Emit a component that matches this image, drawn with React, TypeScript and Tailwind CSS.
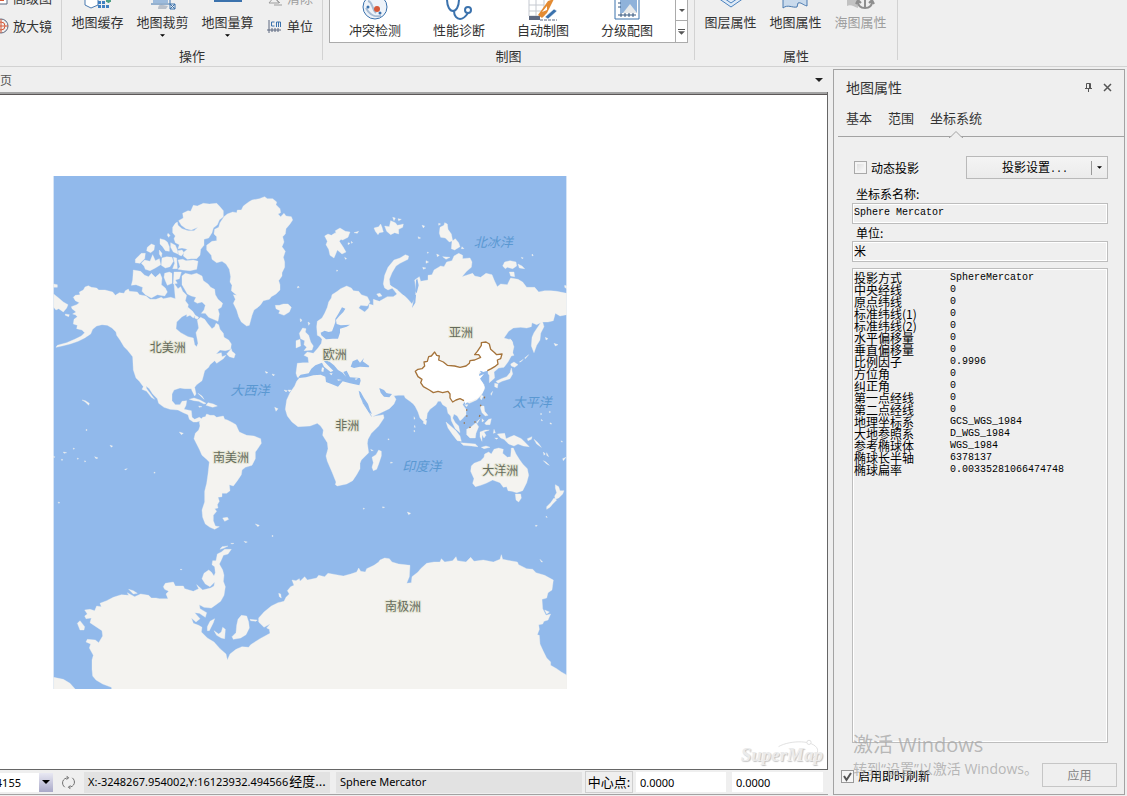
import React, { useState } from 'react';
import clsx from 'clsx';

const CJK = 'font-["Noto_Sans_CJK_SC",sans-serif]';
const UI = 'font-["Noto_Sans","Noto_Sans_CJK_SC",sans-serif]';
const MONO = 'font-["Liberation_Mono","Noto_Sans_CJK_SC",monospace]';

// ─── Projection data ───────────────────────────────────────────

const PARAMS: [string, string][] = [
  ['投影方式', 'SphereMercator'],
  ['中央经线', '0'],
  ['原点纬线', '0'],
  ['标准纬线(1)', '0'],
  ['标准纬线(2)', '0'],
  ['水平偏移量', '0'],
  ['垂直偏移量', '0'],
  ['比例因子', '0.9996'],
  ['方位角', '0'],
  ['纠正角', '0'],
  ['第一点经线', '0'],
  ['第二点经线', '0'],
  ['地理坐标系', 'GCS_WGS_1984'],
  ['大地参照系', 'D_WGS_1984'],
  ['参考椭球体', 'WGS_1984'],
  ['椭球长半轴', '6378137'],
  ['椭球扁率', '0.00335281066474748'],
];

// ─── Map geometry (three units per pixel) ──────────────────────

const LAND = [
  // North America
  'M70 382 76 376 90 374 88 366 100 360 105 351 115 347 124 352 140 354 146 360 165 360 188 366 196 376 208 368 222 370 226 362 235 357 238 364 262 366 268 374 288 378 300 388 318 388 334 382 340 386 362 382 376 386 372 340 384 356 392 350 398 364 410 376 406 392 415 404 412 418 420 428 396 440 380 456 378 476 392 488 414 500 430 504 434 524 440 530 444 520 438 488 446 474 442 450 452 442 464 448 474 462 486 476 494 470 498 460 506 464 510 478 520 490 522 502 536 510 544 522 542 538 526 542 510 540 498 552 514 548 516 560 528 556 520 566 500 580 494 572 480 584 476 592 464 602 460 618 456 632 440 644 434 652 438 672 434 678 426 662 424 656 404 656 390 654 372 660 366 672 366 692 376 704 390 704 396 694 410 692 408 706 402 718 424 722 426 742 434 748 448 742 460 750 440 756 430 756 418 748 414 734 400 728 384 720 360 718 342 712 326 700 322 686 308 672 298 656 288 648 290 656 302 672 314 688 304 682 290 664 276 658 280 650 268 634 258 624 250 600 248 560 232 540 222 530 210 510 200 496 198 486 186 474 172 466 156 464 140 468 128 478 122 492 104 504 84 514 60 522 36 528 18 532 22 526 50 518 74 508 94 498 104 488 96 480 80 476 82 466 70 462 72 448 82 440 76 434 68 432 78 426 66 416 64 410 80 404 88 398 76 392Z',
  // Newfoundland, Chukotka tip
  'M530 552 544 536 546 544 556 552 552 564 538 560Z',
  'M11 372 26 384 40 396 54 404 50 414 40 426 26 416 18 420 11 412Z',
  'M11 342 22 344 22 352 11 352Z M46 432 58 434 56 440 46 436Z',
  // Greenland
  'M522 140 532 132 548 126 560 128 562 120 574 120 580 108 596 96 606 90 628 86 644 80 652 86 668 86 680 96 678 104 690 116 692 128 684 132 692 140 702 130 708 138 724 140 728 150 720 162 708 176 706 192 698 200 702 216 696 230 706 244 700 262 704 276 704 292 696 308 696 318 686 332 690 344 690 360 678 372 664 380 658 388 640 392 632 404 624 412 612 420 606 436 598 466 590 468 574 456 566 440 560 420 550 400 556 388 550 374 560 376 544 362 546 346 540 336 542 320 538 298 528 282 516 274 500 278 486 268 484 256 470 240 470 226 486 214 500 212 500 200 492 192 494 178 506 172 510 158Z',
  // Ellesmere, Devon
  'M520 122 520 140 508 150 502 164 490 174 486 188 476 204 462 208 462 226 452 238 450 256 440 266 424 266 412 268 400 258 402 246 412 238 396 234 384 236 388 224 376 218 372 206 376 198 368 188 368 172 376 160 382 156 384 166 396 176 414 182 432 182 444 172 424 180 408 176 394 166 386 152 400 144 398 130 414 122 422 124 430 106 442 108 460 100 478 102 500 100 508 108Z',
  'M384 270 398 268 408 272 430 270 444 274 440 298 420 302 398 300 384 298 390 290Z M398 282 424 280 398 284Z',
  // Arctic archipelago
  'M330 206 344 210 352 216 358 230 358 244 346 242 338 230 330 222Z M362 218 376 226 382 240 384 252 370 246 362 232Z M384 242 396 240 402 248 394 258 386 254Z',
  'M292 232 304 222 314 226 312 240 302 248 290 242Z M328 240 336 250 334 262 328 252Z M354 190 360 196 356 202 352 196Z',
  'M256 268 274 250 286 250 284 266 270 280 256 278Z M274 280 284 270 300 274 308 254 316 272 328 266 332 284 316 294 300 302 286 298 282 288Z',
  'M336 264 350 260 366 262 370 274 360 290 346 294 334 286Z M370 262 380 264 382 296 368 296 374 280Z',
  'M250 300 272 304 284 316 296 320 304 310 316 322 330 310 336 324 334 344 346 354 352 366 344 378 322 374 304 384 286 374 276 364 278 352 258 344 244 346 248 330Z',
  'M344 310 358 306 366 310 366 340 352 346 346 332 342 322Z M372 306 394 306 388 326 376 330 382 340 370 342Z',
  // Baffin
  'M396 318 406 310 424 314 440 310 456 318 460 332 474 342 482 352 494 358 496 374 504 388 518 400 514 412 504 418 508 432 504 454 490 448 476 442 466 430 454 430 462 420 466 406 456 396 442 400 432 394 438 382 424 378 412 372 404 358 396 344Z',
  'M412 410 428 424 436 436 430 444 420 436 410 440Z M436 436 446 442 442 448 434 444Z',
  // Iceland, British Isles
  'M676 406 688 406 700 402 714 402 724 412 718 426 702 436 686 430 690 422 678 416Z M744 348 748 352 742 354Z',
  'M748 490 758 474 768 476 766 486 776 496 782 516 790 528 786 540 762 542 770 532 762 524 764 512 752 506Z M738 512 750 508 752 528 738 534Z M750 446 756 450 752 456Z M774 456 780 460 776 466Z',
  // South America
  'M448 756 458 742 466 740 470 732 480 736 492 736 500 742 520 738 524 748 532 750 548 758 558 764 564 778 568 786 590 796 612 798 632 806 634 820 622 838 616 846 616 866 606 886 586 892 576 900 574 914 562 932 550 948 538 944 540 962 530 970 516 970 516 980 504 982 508 994 502 1004 504 1014 494 1016 500 1024 490 1036 490 1052 496 1068 508 1070 494 1078 480 1072 466 1062 458 1042 456 1020 464 996 464 964 470 940 474 912 478 876 468 866 456 856 448 838 440 822 432 806 436 790 446 780 450 768Z',
  'M518 1044 532 1042 536 1048 524 1054Z M616 1062 628 1066 624 1070Z',
  // Cuba, Hispaniola
  'M418 688 432 684 450 690 468 700 462 702 446 694 432 692Z M468 706 474 698 490 702 502 708 488 712Z M446 708 456 710 448 712Z M444 670 456 678 462 688 454 680Z',
  // Pacific specks
  'M96 690 106 692 118 700 116 706 106 696Z M388 786 400 790 394 794Z M108 778 112 780 108 782Z M180 826 188 828 184 832Z M134 860 144 864 138 866Z M40 846 50 848 42 850Z M34 868 38 868 36 872Z M70 834 74 836 70 838Z M82 864 86 866 82 868Z M104 872 108 874 104 876Z M10 858 14 860 12 864Z M312 906 316 908 312 910Z M24 996 30 998 26 1000Z M224 898 232 896 226 900Z',
  'M646 604 654 608 648 610Z M666 612 674 614 670 618Z M702 660 712 662 708 666Z M714 660 724 660 718 666Z M674 712 684 716 678 724Z M666 1096 670 1098 666 1100Z',
  // Eurasia with Africa
  'M742 622 738 610 742 580 760 578 776 578 774 562 762 556 772 546 790 550 804 534 814 520 816 508 810 500 802 496 800 470 802 454 816 444 824 430 832 412 836 396 844 384 846 374 862 364 872 356 890 348 904 354 910 362 926 364 934 374 952 380 960 396 952 408 932 406 926 414 944 426 956 414 958 402 970 406 970 388 988 394 1012 380 1030 380 1044 370 1064 378 1074 388 1086 402 1096 382 1098 360 1094 330 1108 320 1112 334 1134 330 1134 316 1146 314 1152 300 1172 288 1182 290 1190 276 1206 272 1212 258 1226 250 1238 256 1238 266 1260 264 1266 276 1264 292 1250 304 1236 320 1268 310 1274 318 1292 322 1308 310 1326 314 1334 334 1342 350 1352 342 1372 344 1382 324 1404 328 1418 336 1430 352 1454 352 1466 366 1484 362 1502 362 1520 364 1550 370 1550 434 1530 438 1516 430 1510 452 1494 456 1478 456 1482 470 1472 490 1470 510 1460 526 1452 548 1444 528 1446 502 1452 488 1472 458 1460 464 1446 458 1444 470 1430 474 1412 472 1390 474 1376 484 1362 504 1384 510 1392 530 1386 554 1374 576 1362 592 1346 594 1332 606 1334 624 1318 638 1318 616 1310 606 1300 612 1290 610 1294 602 1284 620 1302 644 1304 656 1294 676 1280 690 1258 700 1244 694 1238 704 1248 718 1248 734 1236 748 1230 752 1222 738 1212 732 1208 744 1216 758 1226 768 1230 788 1216 776 1204 752 1202 738 1194 730 1190 712 1178 704 1172 694 1164 694 1158 704 1140 718 1132 730 1130 746 1120 754 1110 744 1104 726 1096 710 1090 702 1080 694 1066 684 1062 676 1044 676 1028 678 1010 670 994 660 988 656 1000 678 1014 680 1026 668 1038 688 1032 702 1018 716 990 730 966 740 958 722 936 690 926 664 938 700 954 724 964 740 1000 734 1002 744 986 768 964 790 954 808 952 820 956 848 934 870 930 880 930 896 920 914 908 932 890 942 862 948 856 944 858 936 846 906 832 874 828 858 834 836 832 818 818 796 820 780 812 768 802 760 780 768 744 770 726 756 712 738 706 718 710 690 720 668 734 648 740 634 750 622Z',
  // Novaya Zemlya, Svalbard, Franz Josef, Severnaya
  'M1000 342 1004 316 1014 292 1032 270 1050 264 1066 254 1076 258 1074 268 1050 280 1038 288 1026 308 1018 328 1020 344 1028 354 1014 360 1004 354Z',
  'M1020 346 1040 358 1062 378 1044 376Z',
  'M824 198 834 192 844 196 856 188 862 196 872 192 874 206 868 214 880 232 888 246 876 252 862 240 852 264 840 256 836 238 828 224 832 214Z M856 182 870 174 886 184 900 186 894 202 878 210 862 204Z M912 188 926 184 922 190Z M894 218 900 220 894 224Z M904 214 908 218 904 220Z M884 262 890 266 886 268Z M860 300 864 302 860 304Z',
  'M972 174 986 170 992 162 996 172 1000 186 988 188 984 194 976 184Z M1004 168 1018 170 1022 152 1036 158 1042 166 1052 164 1060 162 1058 172 1046 178 1046 192 1034 188 1022 194 1010 184Z M1028 142 1036 144 1032 152Z M1044 146 1054 148 1046 152Z',
  'M1170 172 1182 166 1184 158 1192 162 1194 178 1204 192 1208 212 1198 216 1186 204 1172 202 1168 190Z M1206 214 1216 206 1226 218 1230 230 1214 240 1204 236Z M1236 230 1242 236 1234 236Z M1166 160 1172 162 1166 166Z M1116 166 1124 168 1120 174Z M1104 200 1112 204 1106 206Z',
  'M1358 288 1364 276 1380 272 1398 276 1400 288 1388 296 1372 292 1366 296Z M1404 282 1416 288 1424 296 1408 294Z M1378 306 1392 306 1394 320 1382 318Z M1446 252 1450 256 1446 258Z M1414 262 1420 264 1416 266Z M1128 272 1136 276 1128 280Z M1160 252 1168 256 1162 260Z M1178 260 1200 262 1188 268Z M1118 292 1128 294 1120 298Z',
  'M1544 346 1550 348 1550 356 1544 352Z M980 372 990 370 996 378 986 380Z M1132 246 1136 248 1132 250Z M1486 502 1494 506 1488 510Z M1512 520 1524 524 1516 528Z',
  // Sakhalin, Japan, Taiwan, Philippines
  'M1380 506 1388 516 1388 548 1392 556 1384 558 1378 534Z M1382 582 1392 576 1404 584 1394 592 1384 588Z M1384 594 1388 612 1380 626 1356 634 1344 640 1338 634 1354 626 1370 620 1380 608Z M1334 640 1344 642 1342 654 1334 650Z M1408 576 1420 568 1412 576Z M1424 564 1436 554 1426 566Z',
  'M1290 684 1294 676 1300 678 1294 690Z M1244 704 1254 704 1250 710Z M1322 672 1328 664 1324 676Z',
  'M1292 708 1302 708 1304 724 1314 736 1306 738 1296 728 1292 716Z M1296 746 1302 752 1296 756Z M1304 760 1316 748 1324 746 1320 764 1308 764Z M1280 756 1290 746 1282 760Z',
  // Indonesia, New Guinea
  'M1188 756 1202 768 1218 782 1230 798 1234 814 1222 812 1208 794 1194 774Z M1232 818 1252 820 1276 822 1284 830 1264 828 1240 826Z M1250 778 1264 770 1278 758 1286 770 1278 790 1276 804 1260 804 1250 794Z M1290 786 1306 780 1318 780 1302 786 1308 796 1302 804 1296 794 1296 814 1290 800Z M1294 832 1308 828 1320 832 1302 836Z',
  'M1332 778 1336 788 1330 790Z M1334 804 1344 804 1340 808Z M1342 792 1364 790 1368 806 1392 796 1414 806 1424 816 1438 830 1420 828 1404 822 1392 828 1376 822 1362 808 1352 804Z M1432 806 1446 800 1444 808 1434 812Z M1452 808 1464 818 1474 832 1460 822Z',
  // Australia, Tasmania, New Zealand
  'M1264 888 1272 880 1292 872 1302 862 1304 852 1316 846 1324 852 1332 838 1346 834 1360 838 1358 850 1372 862 1382 860 1384 834 1390 834 1398 852 1408 868 1418 882 1432 896 1436 916 1430 938 1418 962 1400 968 1386 964 1374 962 1370 950 1360 952 1350 938 1328 930 1308 940 1292 946 1276 950 1268 940 1272 926 1262 904Z M1396 972 1412 972 1414 984 1406 996 1398 990Z',
  'M1516 944 1526 950 1530 962 1542 962 1538 972 1526 984 1516 988 1514 978 1520 968 1516 954Z M1512 984 1520 990 1508 1002 1500 1012 1490 1018 1490 1010 1502 998Z M1488 1038 1492 1042 1488 1042Z M1456 1066 1462 1066 1458 1070Z',
  'M1480 846 1486 852 1482 856Z M1480 872 1488 876 1498 886 1490 882Z M1538 866 1548 862 1540 872Z M1490 848 1496 860 1490 856Z M1472 730 1476 732 1472 734Z M1498 724 1502 726 1498 728Z M1474 748 1478 752 1474 752Z M1500 758 1506 762 1500 762Z M1534 812 1538 816 1534 816Z',
  // Madagascar, Sri Lanka, specks
  'M986 840 994 844 994 858 986 882 980 898 970 902 966 892 970 878 966 862 978 854Z M1122 748 1130 752 1128 764 1120 760Z M1092 740 1095 746 1092 748Z M1094 766 1096 772 1093 772Z M1092 780 1095 784 1092 786Z M962 838 970 842 964 842Z M1022 876 1028 878 1022 880Z M1072 1026 1082 1030 1076 1034Z M998 1010 1004 1012 998 1014Z M940 1014 944 1016 940 1018Z M1014 806 1018 808 1014 810Z',
  // Antarctica
  'M104 1320 120 1318 134 1322 140 1308 154 1310 150 1300 170 1292 190 1282 214 1274 236 1276 232 1268 254 1280 272 1272 296 1276 304 1284 318 1284 328 1286 354 1286 348 1272 356 1264 344 1258 340 1250 346 1240 370 1236 376 1248 400 1248 404 1256 430 1264 446 1256 440 1244 458 1260 482 1254 492 1248 494 1236 480 1250 466 1242 456 1226 462 1210 476 1200 484 1206 492 1218 496 1208 494 1190 486 1184 488 1172 498 1172 502 1152 514 1146 524 1138 544 1138 534 1152 520 1156 514 1170 508 1182 518 1200 522 1216 520 1234 526 1250 522 1276 512 1294 498 1304 484 1314 462 1312 448 1304 450 1316 470 1328 466 1342 448 1330 434 1328 450 1346 438 1356 424 1344 430 1360 446 1366 456 1372 454 1386 472 1404 492 1416 510 1436 528 1452 532 1470 540 1452 558 1438 576 1430 596 1432 602 1424 630 1406 660 1390 658 1378 650 1374 660 1362 642 1372 626 1356 626 1344 642 1326 664 1308 684 1298 702 1294 708 1282 718 1272 712 1262 722 1250 732 1246 726 1230 738 1232 748 1226 750 1234 764 1220 772 1230 800 1224 806 1216 824 1220 834 1210 858 1214 880 1218 902 1212 920 1206 926 1194 932 1204 946 1206 950 1196 972 1186 986 1176 990 1170 1004 1164 1018 1166 1026 1176 1046 1182 1080 1186 1078 1220 1070 1240 1084 1238 1086 1220 1104 1206 1112 1196 1130 1180 1152 1176 1170 1176 1174 1166 1184 1176 1208 1172 1218 1160 1222 1172 1248 1176 1262 1162 1272 1174 1300 1170 1330 1176 1350 1168 1354 1154 1358 1168 1380 1172 1402 1176 1406 1184 1430 1196 1448 1198 1458 1208 1484 1216 1510 1230 1506 1260 1494 1268 1490 1284 1476 1288 1478 1316 1488 1336 1502 1332 1494 1350 1482 1354 1478 1362 1466 1364 1468 1378 1462 1394 1468 1396 1470 1422 1480 1444 1490 1464 1502 1476 1502 1486 1520 1496 1534 1506 1552 1516 1552 1560 186 1560 184 1552 158 1542 138 1530 128 1518 126 1498 126 1470 130 1456 118 1434 122 1422 108 1416 112 1408 136 1410 146 1418 158 1398 156 1382 138 1370 120 1358 124 1344 108 1346 104 1338 112 1332Z',
  'M11 1522 40 1528 60 1540 78 1560 11 1560Z M82 1360 90 1352 104 1370 102 1380 90 1380Z M236 1258 250 1262 262 1270 250 1272Z',
  'M472 1370 480 1354 494 1346 490 1358 478 1382 472 1382Z M492 1382 506 1392 514 1386 518 1372 526 1378 524 1406 514 1404 500 1396Z M546 1400 558 1388 560 1366 564 1348 574 1336 590 1338 596 1356 598 1374 588 1394 572 1404 550 1408Z M600 1348 622 1350 618 1354 602 1352Z M686 1270 692 1272 694 1284 688 1280Z',
  'M510 1138 516 1130 534 1128 522 1134Z M542 1120 552 1120 546 1122Z M582 1114 592 1116 586 1118Z M1470 1168 1478 1176 1474 1176Z M1484 1320 1498 1326 1490 1332Z M390 1198 396 1198 394 1200Z',
];

const SEAS = [
  // Mediterranean
  'M746 620 752 614 776 610 784 596 796 586 816 578 822 590 842 606 850 602 838 590 822 574 832 570 852 586 864 600 878 608 888 620 880 606 890 602 900 622 930 624 932 632 928 646 900 640 878 634 864 650 844 642 828 636 826 620 812 614 790 616 768 622 748 624Z',
  // Baltic
  'M876 412 886 416 880 426 868 438 858 450 860 462 872 466 900 464 890 470 870 476 870 488 864 506 848 506 828 508 814 496 812 488 824 482 836 486 846 484 852 468 856 456 856 446 866 430Z',
  // Black Sea, Red Sea, Persian Gulf
  'M902 590 908 574 922 568 930 578 942 564 938 574 958 588 956 592 930 590 912 594Z',
  'M926 662 932 666 942 684 954 702 960 720 966 732 956 726 942 702 930 680Z',
  'M988 654 1002 660 1010 670 1026 672 1018 682 1002 680 992 668Z',
  // Gulf of Ob and Yenisei inlets
  'M1092 376 1098 374 1096 398 1086 414 1090 396Z M1098 330 1102 326 1106 346 1100 370 1096 364Z',
  // Bohai
  'M1286 604 1292 598 1304 598 1314 602 1312 618 1300 620 1288 614 1294 606Z',
];

const CHINA = 'M1096 604 1104 598 1116 596 1124 588 1122 576 1132 574 1136 560 1144 558 1154 546 1160 556 1168 558 1166 570 1180 576 1192 586 1214 588 1230 592 1248 588 1258 580 1260 572 1274 570 1292 562 1286 554 1274 554 1282 544 1294 526 1294 518 1308 516 1318 522 1322 538 1334 548 1340 554 1356 552 1352 566 1342 570 1344 582 1334 590 1324 596 1312 602 1300 606 1292 602 1286 610 1288 618 1302 612 1290 626 1298 638 1304 652 1298 668 1284 684 1266 692 1252 696 1246 702 1242 692 1230 686 1218 690 1208 696 1200 684 1200 672 1194 664 1178 668 1164 664 1150 668 1138 660 1120 650 1112 638 1116 628 1104 620Z';
const CHINA_BORDER = 'M1312 602 1324 596 1334 590 1344 582 1342 570 1352 566 1356 552 1340 554 1334 548 1322 538 1318 522 1308 516 1294 518 1294 526 1282 544 1274 554 1286 554 1292 562 1274 570 1260 572 1258 580 1248 588 1230 592 1214 588 1192 586 1180 576 1166 570 1168 558 1160 556 1154 546 1144 558 1136 560 1132 574 1122 576 1124 588 1116 596 1104 598 1096 604 1104 620 1116 628 1112 638 1120 650 1138 660 1150 668 1164 664 1178 668 1194 664 1200 672 1200 684 1208 696 1218 690 1230 686 1242 692';

const CONTINENTS = [
  { name: '北美洲', x: 353, y: 545 },
  { name: '南美洲', x: 543, y: 876 },
  { name: '欧洲', x: 854, y: 566 },
  { name: '亚洲', x: 1233, y: 500 },
  { name: '非洲', x: 892, y: 779 },
  { name: '大洋洲', x: 1351, y: 914 },
  { name: '南极洲', x: 1059, y: 1322 },
];

const OCEANS = [
  { name: '北冰洋', x: 1330, y: 231 },
  { name: '大西洋', x: 600, y: 675 },
  { name: '太平洋', x: 1446, y: 711 },
  { name: '印度洋', x: 1115, y: 904 },
];

function WorldMap() {
  return (
    <svg viewBox="9 18 1542 1539" className={clsx('block h-[513px] w-[514px]', CJK)} role="img" aria-label="世界地图">
      <rect x="9" y="18" width="1542" height="1539" fill="#d5e4f6" />
      <rect x="12" y="18" width="1536" height="1539" fill="#91b9eb" />
      {LAND.map((d, i) => (
        <path key={i} d={d} fill="#f4f3f0" stroke="#f4f3f0" strokeWidth="1" />
      ))}
      {SEAS.map((d, i) => (
        <path key={i} d={d} fill="#91b9eb" />
      ))}
      {/* Crete, Cyprus, Sardinia */}
      <path d="M862 628 876 630 864 632Z M914 626 924 624 918 630Z M816 592 822 594 820 606 814 604Z M838 610 848 610 844 616Z" fill="#f4f3f0" />
      <path d={CHINA} fill="#fff" />
      <path d={CHINA_BORDER} fill="none" stroke="#a5733a" strokeWidth="4" strokeLinejoin="round" />
      <path d="M1304 680 1303 685 M1293 704 1291 709 M1290 735 1288 740 M1276 754 1274 758 M1262 771 1258 773 M1243 761 1243 757 M1250 740 1251 736 M1250 722 1250 718" stroke="#9a7650" strokeWidth="4" />
      {CONTINENTS.map(c => (
        <text key={c.name} x={c.x} y={c.y} fontSize="36" textAnchor="middle" fill="#656b5c" stroke="#e6e6d6" strokeWidth="6" paintOrder="stroke">
          {c.name}
        </text>
      ))}
      {OCEANS.map(o => (
        <text key={o.name} x={o.x} y={o.y} fontSize="39" fontStyle="italic" textAnchor="middle" fill="#5a98d2">
          {o.name}
        </text>
      ))}
    </svg>
  );
}

// ─── Icons ─────────────────────────────────────────────────────

function Caret({ className }: { className?: string }) {
  return (
    <svg viewBox="0 0 8 4" className={clsx('shrink-0', className ?? 'h-1 w-2')} aria-hidden="true">
      <path d="M0 0h8L4 4z" fill="currentColor" />
    </svg>
  );
}

const ICONS: Record<string, React.ReactNode> = {
  cache: (
    <>
      <path d="M1 2v18l6 3 7-3V2" fill="#fff" stroke="#4a7ab0" />
      <path d="M14 16h3v3h-3zM18 16h3v3h-3zM14 20h3v3h-3zM18 20h3v3h-3zM22 20h3v3h-3z" fill="#3f7fc0" />
      <path d="M22 16h5M24.500 13v5" stroke="#4f9f86" strokeWidth="2" />
    </>
  ),
  clip: (
    <>
      <path d="M4 5h15v13H4z" fill="#9dbbdc" />
      <path d="M9 24c0-4 2-5 5-4l5 1-2 3z" fill="#b9c0ca" />
      <path d="M2 19h24M21 8v16h5v-5l-5 5M21 19l5 5" fill="none" stroke="#3b72ad" />
    </>
  ),
  measure: <path d="M0 6h28v11H0z" fill="#3b72ad" />,
  conflict: (
    <>
      <circle cx="14" cy="10" r="12" fill="#eef3f9" stroke="#3b72ad" />
      <path d="M5 11c4 8 9 9 15 8M7 4c5 1 3 7 8 12" fill="none" stroke="#a7bcd4" strokeWidth="2" />
      <circle cx="16" cy="12" r="3" fill="#d65a3a" />
      <circle cx="7" cy="10" r="1.500" fill="#3b72ad" />
      <circle cx="19" cy="16" r="1.500" fill="#3b72ad" />
    </>
  ),
  diagnose: (
    <>
      <path d="M2 2c0 8 3 12 6 12s6-4 6-12M9 14c0 5 3 8 6 8 4 0 6-3 8-6" fill="none" stroke="#3b72ad" strokeWidth="2" />
      <circle cx="23" cy="13" r="3" fill="#fff" stroke="#3b72ad" strokeWidth="2" />
    </>
  ),
  draw: (
    <>
      <path d="M0 2h15v17H0zM0 8h15M0 14h15M7 2v18" fill="#fff" stroke="#c5c9d0" />
      <path d="M0 19h11v4H0z" fill="#5d6880" />
      <path d="M9 18 19 4l6-2-7 14-5 5z" fill="#e38b33" />
      <path d="m13 15 5-6v4z" fill="#fff" />
      <path d="m16 20 9-8 3 2-9 8z" fill="#3b72ad" stroke="#fff" strokeWidth="0.500" />
      <path d="M11 23h17" stroke="#5d6880" strokeDasharray="3 1" />
    </>
  ),
  layout: (
    <>
      <path d="M2 0h24v22H2z" fill="#fff" stroke="#3b72ad" />
      <path d="M7 0h17v16H7z" fill="#8fb2da" />
      <path d="m10 16 7-9 7 9z" fill="#e7e9ea" />
      <path d="M5 18h18M8 16v4M12 16v4M16 16v4M20 16v4M5 2h3M5 6h3M5 10h3" stroke="#34577f" />
    </>
  ),
  layers: (
    <path d="m1 9 13 9 13-9M1 13l13 9 13-9M5 8l9 6 9-6" fill="#dfeaf6" stroke="#4a82bf" />
  ),
  mapProps: (
    <path d="M1 4v19c5-4 9 0 14-1l1-4c3-1 5 2 9 3V4" fill="#c9daec" stroke="#4a7ab0" />
  ),
  sea: (
    <>
      <path d="M0 6v15c4-2 7 1 11 2V6z" fill="#c2c2c2" />
      <path d="M18 6v17M14 14h8M11 16c0 5 3 7 7 7s7-2 7-7M9 19l2-4 3 3M27 19l-2-4-3 3" fill="none" stroke="#8e8e8e" strokeWidth="2" />
    </>
  ),
};

function RibbonIcon({ name }: { name: string }) {
  return (
    <svg viewBox="0 0 28 25" className="h-[25px] w-7 shrink-0 overflow-visible" aria-hidden="true">
      {ICONS[name]}
    </svg>
  );
}

// ─── Ribbon ────────────────────────────────────────────────────

interface RibbonButtonProps {
  icon: string;
  label: string;
  menu?: boolean;
  disabled?: boolean;
}

function RibbonButton({ icon, label, menu, disabled }: RibbonButtonProps) {
  return (
    <button type="button" disabled={disabled} className="flex h-12 w-[65px] flex-col items-center justify-end disabled:text-[#9d9d9d]">
      <RibbonIcon name={icon} />
      <span className="mt-1 shrink-0 leading-4">{label}</span>
      <span className="flex h-[18px] shrink-0 items-start pt-1">{menu && <Caret className="h-[3px] w-[5px] text-black" />}</span>
    </button>
  );
}

function Divider() {
  return <div className="h-[60px] w-px shrink-0 bg-[#d2d2d2]" />;
}

function GroupLabel({ children }: { children: React.ReactNode }) {
  return <div className="h-[18px] text-center leading-4">{children}</div>;
}

function Ribbon() {
  return (
    <header className={clsx('flex h-[67px] shrink-0 items-start overflow-hidden border-b border-[#d2d2d2] text-[13px] text-[#333]', CJK)}>
      <div className="flex h-[34px] w-[61px] shrink-0 flex-col items-end justify-end gap-[12px] overflow-hidden pr-[9px] whitespace-nowrap">
        <button type="button" className="flex items-center gap-1 leading-4">
          <svg viewBox="0 0 16 16" className="h-4 w-4" aria-hidden="true">
            <path d="M1 1h13v13H1z" fill="#fff" stroke="#5d6880" />
            <path d="M5 5h6v6H5z" fill="#d65a3a" />
          </svg>
          高级图
        </button>
        <button type="button" className="flex items-center gap-1 leading-4">
          <svg viewBox="0 0 16 16" className="h-4 w-4" fill="none" aria-hidden="true">
            <circle cx="8" cy="8" r="7" stroke="#5d6880" />
            <circle cx="8" cy="8" r="4" stroke="#d65a3a" />
            <path d="M0 8h15M8 1v14" stroke="#d65a3a" />
          </svg>
          放大镜
        </button>
      </div>
      <Divider />
      <section className="flex w-[260px] shrink-0 flex-col">
        <div className="flex h-12 items-end pl-[3px]">
          <RibbonButton icon="cache" label="地图缓存" />
          <RibbonButton icon="clip" label="地图裁剪" menu />
          <RibbonButton icon="measure" label="地图量算" menu />
          <div className="flex h-12 flex-col justify-end gap-[12px] pb-[14px] pl-[7px]">
            <button type="button" disabled className="flex items-center gap-1 leading-4 text-[#9d9d9d]">
              <svg viewBox="0 0 16 16" className="h-4 w-4" aria-hidden="true">
                <path d="m2 13 5-6 5 6zM7 15h8M9 9l4 4" fill="none" stroke="currentColor" />
              </svg>
              清除
            </button>
            <button type="button" className="flex items-center gap-1 leading-4">
              <svg viewBox="0 0 16 16" className="h-4 w-4" fill="none" aria-hidden="true">
                <path d="M2 2v13M0 12h14M5 10v4M8 10v4M11 10v4" stroke="#5d6880" />
                <path d="M7.500 4H4.500v4h3M9.500 9V4h4v5M11.500 4v5" stroke="#3b72ad" />
              </svg>
              单位
            </button>
          </div>
        </div>
        <GroupLabel>操作</GroupLabel>
      </section>
      <Divider />
      <section className="flex w-[371px] shrink-0 flex-col">
        <div className="ml-1.5 mr-1.5 flex h-[43px] items-end border border-t-0 border-[#ababab] bg-white">
          <div className="flex h-full flex-1 items-end pl-[3px]">
            {[
              ['conflict', '冲突检测'],
              ['diagnose', '性能诊断'],
              ['draw', '自动制图'],
              ['layout', '分级配图'],
            ].map(([icon, label]) => (
              <button key={label} type="button" className="flex h-full w-[84px] flex-col items-center justify-end pb-1">
                <RibbonIcon name={icon} />
                <span className="shrink-0 leading-4">{label}</span>
              </button>
            ))}
          </div>
          <div className="flex h-full w-3 shrink-0 flex-col border-l border-[#ababab] text-[#555]">
            <button type="button" aria-label="向下滚动" className="flex h-5 items-center justify-center">
              <Caret className="h-[3px] w-[6px]" />
            </button>
            <button type="button" aria-label="更多" className="flex flex-1 flex-col items-center justify-center gap-px border-t border-[#ababab]">
              <span className="h-px w-[7px] bg-[#555]" />
              <Caret className="h-[4px] w-[7px]" />
            </button>
          </div>
        </div>
        <div className="h-[5px]" />
        <GroupLabel>制图</GroupLabel>
      </section>
      <Divider />
      <section className="flex w-[202px] shrink-0 flex-col">
        <div className="flex h-12 items-end pl-[3px]">
          <RibbonButton icon="layers" label="图层属性" />
          <RibbonButton icon="mapProps" label="地图属性" />
          <RibbonButton icon="sea" label="海图属性" disabled />
        </div>
        <GroupLabel>属性</GroupLabel>
      </section>
      <Divider />
    </header>
  );
}

// ─── Map window ────────────────────────────────────────────────

function MapWindow() {
  return (
    <div className="flex min-w-0 flex-1 flex-col">
      <div className="flex h-[25px] items-center justify-between pr-1 text-[#555]">
        <span className={clsx('text-[12px]', CJK)}>页</span>
        <button type="button" aria-label="窗口列表" className="p-px text-[#222]">
          <Caret />
        </button>
      </div>
      <div className="relative flex-1 border-r border-b border-[#666] bg-white">
        <div className="h-[3px] border-t-2 border-b border-t-[#a3a3a3] border-b-[#5c5858]" />
        <div className="pt-[81px] pl-[53px]">
          <WorldMap />
        </div>
        <div className="absolute right-1 bottom-0 text-[#ebebeb]">
          <svg viewBox="0 0 50 26" className="absolute right-0 bottom-2 h-[22px] w-[50px]" fill="none" stroke="#dcdcdc" aria-hidden="true">
            <path d="M2 9C16 1 44 1 48 12c1 5-2 8-6 11" />
            <circle cx="38" cy="4" r="2.500" fill="#fff" />
          </svg>
          <span className='relative font-["Liberation_Serif",serif] text-[19px] font-bold italic [text-shadow:1px_1px_1px_#c4c4c4]'>SuperMap</span>
        </div>
      </div>
      <footer className={clsx('flex h-[25px] shrink-0 items-center border-b border-[#a3a3a3] text-[11px] text-black', UI)}>
        <input aria-label="比例尺" defaultValue="4155" className="-ml-1.5 h-[19px] w-[45px] bg-white px-0 pr-[18px] text-right outline-none" />
        <button type="button" aria-label="选择比例尺" className="flex h-[19px] w-[14px] items-center justify-center bg-gradient-to-b from-[#e9e9f3] to-[#a9a9c8]">
          <Caret />
        </button>
        <button type="button" aria-label="刷新" className="mx-2 text-[#666]">
          <svg viewBox="0 0 16 16" className="h-[15px] w-[15px]" fill="none" stroke="currentColor" aria-hidden="true">
            <path d="M4 13C0 10 1 3 8 3M6 1l2 2-2 2M12 3c4 3 3 10-4 10M10 11l-2 2 2 2" />
          </svg>
        </button>
        <div className="flex h-[21px] flex-1 items-center gap-px overflow-hidden bg-[#e2e2e2] px-1 whitespace-nowrap">
          <span>X:-3248267.954002,Y:16123932.494566</span>
          <span className="text-[13px]">经度...</span>
        </div>
        <div className="ml-1.5 flex h-[21px] flex-1 items-center bg-[#e2e2e2] px-1">Sphere Mercator</div>
        <button type="button" className="ml-[3px] h-[22px] w-12 border border-[#cfcfcf] text-[13px] leading-5 whitespace-nowrap">中心点:</button>
        <input aria-label="中心点 X" defaultValue="0.0000" className="ml-[3px] h-5 w-[90px] bg-white px-1 outline-none" />
        <input aria-label="中心点 Y" defaultValue="0.0000" className="mr-[5px] ml-1.5 h-5 w-[91px] bg-white px-1 outline-none" />
      </footer>
    </div>
  );
}

// ─── Properties panel ──────────────────────────────────────────

const TABS = ['基本', '范围', '坐标系统'];

function PropertiesPanel() {
  const [tab, setTab] = useState('坐标系统');
  const [dynamic, setDynamic] = useState(false);
  const [live, setLive] = useState(true);

  return (
    <aside className={clsx('relative mt-0.5 mr-0.5 ml-[5px] flex w-[292px] shrink-0 flex-col border border-[#a3a3a3] text-[12px] text-black', CJK)}>
      <div className="flex h-9 items-center pr-3 pb-0.5 pl-3 text-[14px] text-[#333]">
        <h2 className="flex-1">地图属性</h2>
        <button type="button" aria-label="固定" className="mr-2.5 text-[#555]">
          <svg viewBox="0 0 9 9" className="h-[9px] w-[9px]" fill="none" stroke="currentColor" aria-hidden="true">
            <path d="M2.500 5.500v-5h4v5M5.500 0v6M1 5.500h7M4.500 6v3" />
          </svg>
        </button>
        <button type="button" aria-label="关闭" className="text-[#555]">
          <svg viewBox="0 0 9 9" className="h-[9px] w-[9px]" fill="none" stroke="currentColor" strokeWidth="1.500" aria-hidden="true">
            <path d="m1 1 7 7M8 1 1 8" />
          </svg>
        </button>
      </div>

      {/* Tabs */}
      <nav className="ml-1 flex h-[31px] items-start gap-4 border-b border-[#a3a3a3] pt-[3px] pl-2 text-[13px] leading-[18px] text-[#333]">
        {TABS.map(t => (
          <button key={t} type="button" onClick={() => setTab(t)} className="relative h-[28px]">
            <span className="block h-full">{t}</span>
            {t === tab && (
              <svg viewBox="0 0 14 8" className="absolute -bottom-px left-1/2 h-2 w-[14px] -translate-x-1/2" aria-hidden="true">
                <path d="M0 7.500h1l6-6 6 6h1V8H0z" fill="#efefef" />
                <path d="M0 7.500h1l6-6 6 6h1" fill="none" stroke="#a3a3a3" />
              </svg>
            )}
          </button>
        ))}
      </nav>

      <div className="flex flex-1 flex-col pt-[19px] pr-4 pl-[18px]">
        <div className="flex h-[23px] items-center justify-between">
          <label className="flex items-center gap-1 pl-0.5">
            <input
              type="checkbox"
              checked={dynamic}
              onChange={e => setDynamic(e.target.checked)}
              className="h-[13px] w-[13px] appearance-none border border-[#a9a9a9] bg-gradient-to-br from-[#d8d8d8] to-white shadow-[inset_0_0_0_2px_#f4f4f4]"
            />
            动态投影
          </label>
          <div className="flex h-[23px] w-[142px] items-center border border-[#b9b9b9] bg-gradient-to-b from-[#f4f4f4] to-[#ebebeb]">
            <button type="button" className="flex-1 pl-3">
              投影设置<span className={clsx('text-[10px]', MONO)}>...</span>
            </button>
            <button type="button" aria-label="更多投影设置" className="flex h-[14px] w-4 items-center justify-center border-l border-[#999]">
              <Caret className="h-[3px] w-[5px]" />
            </button>
          </div>
        </div>
        <label htmlFor="crs-name" className="mt-1.5 pl-1 leading-[18px]">坐标系名称:</label>
        <input
          id="crs-name"
          readOnly
          value="Sphere Mercator"
          className={clsx('h-[21px] border border-[#bdbdbd] bg-transparent px-px pb-0.5 text-[10px] shadow-[inset_0_0_0_1px_#fff] outline-none', MONO)}
        />
        <label htmlFor="crs-unit" className="pl-1 leading-[17px]">单位:</label>
        <input
          id="crs-unit"
          readOnly
          value="米"
          className="h-[21px] border border-[#bdbdbd] bg-transparent px-px pb-0.5 shadow-[inset_0_0_0_1px_#fff] outline-none"
        />
        <div className="mt-1.5 flex-1 border border-[#bdbdbd] pt-[3px] pl-px shadow-[inset_0_0_0_1px_#fff]">
          <table className="border-collapse">
            <tbody>
              {PARAMS.map(([name, value]) => (
                <tr key={name} className="h-3">
                  <td className="w-24 p-0 leading-3">{name}</td>
                  <td className={clsx('p-0 text-[10px] leading-3', MONO)}>{value}</td>
                </tr>
              ))}
            </tbody>
          </table>
        </div>
      </div>

      <div className="flex h-[51px] items-end justify-between pr-[7px] pb-[7px] pl-[7px]">
        <label className="flex h-[22px] items-center gap-1">
          <span className="relative flex h-[13px] w-[13px]">
            <input
              type="checkbox"
              checked={live}
              onChange={e => setLive(e.target.checked)}
              className="h-[13px] w-[13px] appearance-none border border-[#999] bg-[#f6f6f6]"
            />
            {live && (
              <svg viewBox="0 0 13 13" className="pointer-events-none absolute inset-0" fill="none" stroke="#555" strokeWidth="2" aria-hidden="true">
                <path d="m3 6 2.500 4L10 3" />
              </svg>
            )}
          </span>
          启用即时刷新
        </label>
        <button type="button" disabled className="h-6 w-[75px] border border-[#c6c6c6] text-[#838383]">应用</button>
      </div>

      {/* Activation watermark */}
      <div className='pointer-events-none absolute bottom-[15px] left-[19px] font-["Open_Sans","Noto_Sans_CJK_SC",sans-serif] whitespace-nowrap text-[#a8a8a8]/80'>
        <p className="text-[20px] leading-7">激活 Windows</p>
        <p className="text-[14px] leading-5">转到“设置”以激活 Windows。</p>
      </div>
    </aside>
  );
}

export default function App() {
  return (
    <div className="flex min-h-screen flex-col overflow-hidden bg-[#efefef]">
      <Ribbon />
      <main className="flex flex-1 pb-px">
        <MapWindow />
        <PropertiesPanel />
      </main>
    </div>
  );
}
